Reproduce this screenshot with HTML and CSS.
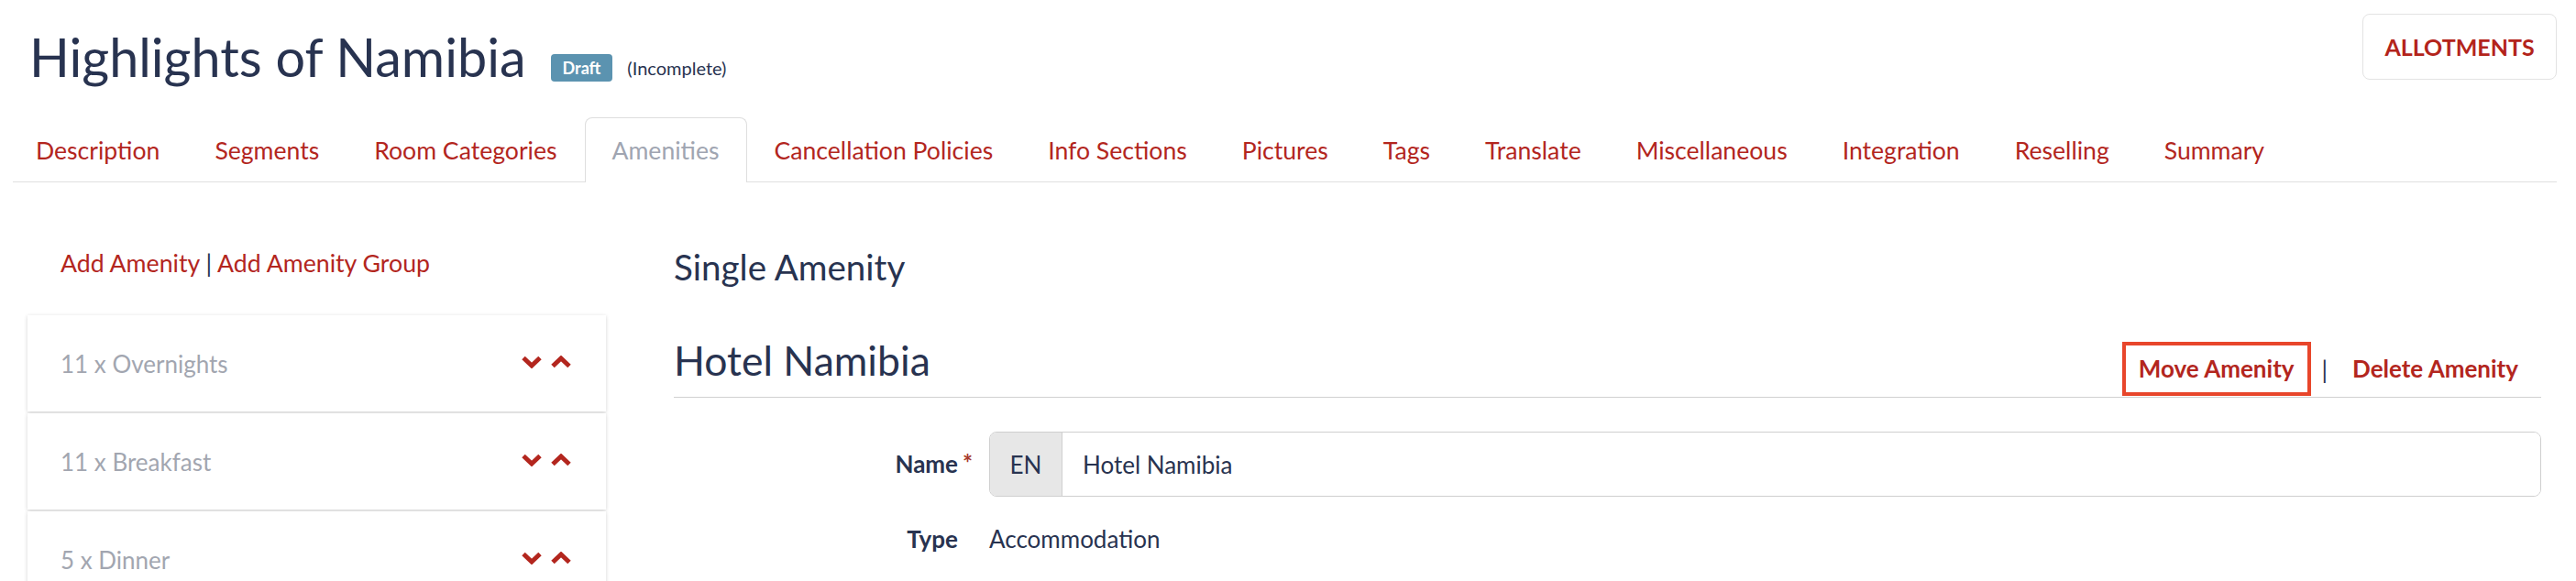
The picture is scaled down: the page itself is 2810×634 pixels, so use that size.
FILE: index.html
```html
<!DOCTYPE html>
<html lang="en">
<head>
  <meta charset="UTF-8">
  <meta name="viewport" content="width=device-width, initial-scale=1.0">
  <title>Highlights of Namibia - Amenities</title>
  <link rel="stylesheet" href="styles.css">
</head>
<body>
  <div class="page">
    <header class="page-header">
      <div class="title-wrap">
        <h1 class="title">Highlights of Namibia</h1>
        <span class="badge">Draft</span>
        <span class="status">(Incomplete)</span>
      </div>
      <a class="btn-outline" href="#">ALLOTMENTS</a>
    </header>

    <nav class="tabs">
      <a class="tab" href="#">Description</a>
      <a class="tab" href="#">Segments</a>
      <a class="tab" href="#">Room Categories</a>
      <a class="tab active" href="#">Amenities</a>
      <a class="tab" href="#">Cancellation Policies</a>
      <a class="tab" href="#">Info Sections</a>
      <a class="tab" href="#">Pictures</a>
      <a class="tab" href="#">Tags</a>
      <a class="tab" href="#">Translate</a>
      <a class="tab" href="#">Miscellaneous</a>
      <a class="tab" href="#">Integration</a>
      <a class="tab" href="#">Reselling</a>
      <a class="tab" href="#">Summary</a>
    </nav>

    <div class="content">
      <aside class="sidebar">
        <div class="add-links">
          <a href="#">Add Amenity</a> | <a href="#">Add Amenity Group</a>
        </div>
        <ul class="amenity-list">
          <li class="amenity-item">
            <span>11 x Overnights</span>
            <span class="sort">
              <svg width="22" height="14" viewBox="0 0 22 14"><polyline points="2,2.5 11,11 20,2.5" /></svg>
              <svg width="22" height="14" viewBox="0 0 22 14"><polyline points="2,11.5 11,3 20,11.5" /></svg>
            </span>
          </li>
          <li class="amenity-item">
            <span>11 x Breakfast</span>
            <span class="sort">
              <svg width="22" height="14" viewBox="0 0 22 14"><polyline points="2,2.5 11,11 20,2.5" /></svg>
              <svg width="22" height="14" viewBox="0 0 22 14"><polyline points="2,11.5 11,3 20,11.5" /></svg>
            </span>
          </li>
          <li class="amenity-item">
            <span>5 x Dinner</span>
            <span class="sort">
              <svg width="22" height="14" viewBox="0 0 22 14"><polyline points="2,2.5 11,11 20,2.5" /></svg>
              <svg width="22" height="14" viewBox="0 0 22 14"><polyline points="2,11.5 11,3 20,11.5" /></svg>
            </span>
          </li>
        </ul>
      </aside>

      <main class="detail">
        <h2 class="section-title">Single Amenity</h2>
        <div class="detail-head">
          <h3>Hotel Namibia</h3>
          <div class="actions">
            <a class="action highlighted" href="#">Move Amenity</a>
            <span class="sep">|</span>
            <a class="action" href="#">Delete Amenity</a>
          </div>
        </div>

        <div class="form-grid">
          <label class="form-label" for="amenity-name">Name</label>
          <span class="required">*</span>
          <div class="input-group">
            <span class="addon">EN</span>
            <input class="input" id="amenity-name" type="text" value="Hotel Namibia">
          </div>

          <span class="form-label">Type</span>
          <span></span>
          <span class="form-value">Accommodation</span>
        </div>
      </main>
    </div>
  </div>
</body>
</html>
```

FILE: styles.css
```css
/* Amenities page */
body {
  margin: 0;
  font-family: Lato, "Noto Sans", sans-serif;
  color: #283350;
  background-color: #fff;
  overflow: hidden;
}

a {
  color: #b3261e;
  text-decoration: none;
}

.page {
  padding: 0 21px 0 14px;
}

/* header */
.page-header {
  display: flex;
  justify-content: space-between;
  align-items: flex-start;
  height: 128px;
}

.title-wrap {
  display: flex;
  align-items: flex-start;
  padding-left: 18px;
}

.title {
  margin: 0;
  padding-top: 27px;
  font-size: 57.5px;
  font-weight: 400;
  line-height: 69px;
}

.badge {
  display: flex;
  align-items: center;
  box-sizing: border-box;
  height: 30px;
  margin: 59px 0 0 27px;
  padding: 0 13px;
  background-color: #5b93b0;
  color: #fff;
  font-size: 18px;
  font-weight: 700;
  border-radius: 4px;
}

.status {
  margin: 62px 0 0 16px;
  font-size: 20px;
  line-height: 24px;
}

.btn-outline {
  display: flex;
  align-items: center;
  justify-content: center;
  box-sizing: border-box;
  width: 212px;
  height: 72px;
  margin-top: 15px;
  border: 1px solid #e3e3e3;
  border-radius: 8px;
  color: #b3241b;
  font-size: 25px;
  font-weight: 700;
}

/* tabs */
.tabs {
  display: flex;
  border-bottom: 1px solid #e0e0e0;
}

.tab {
  display: flex;
  align-items: center;
  height: 70px;
  padding: 0 29px;
  margin-bottom: -1px;
  border: 1px solid transparent;
  border-bottom: 0;
  border-radius: 8px 8px 0 0;
  font-size: 26.6px;
}

.tab:first-child {
  padding-left: 24px;
}

.tab.active {
  color: #a0a5b1;
  background-color: #fff;
  border-color: #dedede;
}

/* content */
.content {
  display: flex;
  gap: 74px;
  padding: 0 17px 0 16px;
}

.sidebar {
  flex: none;
  width: 631px;
}

.add-links {
  margin-top: 73px;
  padding-left: 36px;
  font-size: 26.7px;
  line-height: 31px;
}

.amenity-list {
  display: flex;
  flex-direction: column;
  gap: 2px;
  margin: 41px 0 0;
  padding: 0;
  list-style: none;
}

.amenity-item {
  display: flex;
  align-items: center;
  justify-content: space-between;
  height: 105px;
  padding: 0 38px 0 36px;
  background-color: #fff;
  box-shadow: 0 1px 4px rgba(0, 0, 0, 0.18);
  color: #a2a6b0;
  font-size: 26px;
}

.sort {
  display: flex;
  gap: 10px;
  margin-top: -4px;
}

.sort polyline {
  fill: none;
  stroke: #b3261e;
  stroke-width: 5;
}

.detail {
  flex: 1;
}

.section-title {
  margin: 69px 0 0;
  font-size: 38.6px;
  font-weight: 400;
  line-height: 46px;
}

.detail-head {
  display: flex;
  justify-content: space-between;
  align-items: flex-end;
  margin-top: 52px;
  border-bottom: 1px solid #d0d0d0;
}

.detail-head h3 {
  margin: 0 0 14px;
  font-size: 44.5px;
  font-weight: 400;
  line-height: 53px;
}

.actions {
  display: flex;
  align-items: center;
  margin: 0 7px 1px 0;
}

.action {
  padding: 10px 14px;
  border: 4px solid transparent;
  font-size: 26px;
  font-weight: 700;
  line-height: 31px;
}

.action.highlighted {
  border-color: #e8462b;
}

.sep {
  margin: 0 9px 0 12px;
  font-size: 26px;
}

/* form */
.form-grid {
  display: grid;
  grid-template-columns: 310px 34px 1fr;
  align-items: center;
  row-gap: 31px;
  margin-top: 37px;
  font-size: 26px;
}

.form-label {
  text-align: right;
  font-weight: 700;
  line-height: 31px;
}

.required {
  padding-left: 5px;
  margin-bottom: 4px;
  color: #a83a2e;
  font-size: 26px;
  font-weight: 700;
}

.input-group {
  display: flex;
  box-sizing: border-box;
  height: 71px;
  border: 1px solid #cfcfcf;
  border-radius: 8px;
  overflow: hidden;
}

.addon {
  display: flex;
  align-items: center;
  justify-content: center;
  width: 78px;
  background-color: #e7e7e7;
  border-right: 1px solid #cfcfcf;
}

.input {
  flex: 1;
  padding: 0 22px;
  border: 0;
  outline: none;
  font: inherit;
  color: #283350;
}

.form-value {
  line-height: 31px;
}
```
